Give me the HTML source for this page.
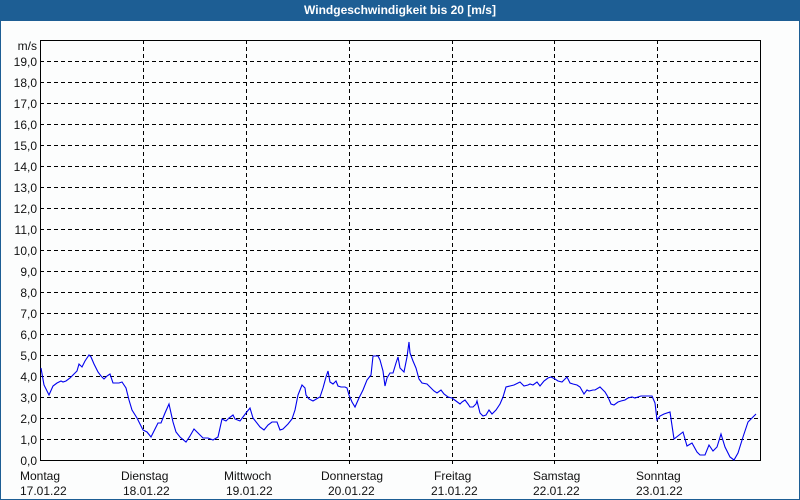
<!DOCTYPE html>
<html><head><meta charset="utf-8"><style>
html,body{margin:0;padding:0;width:800px;height:500px;overflow:hidden;background:#fcfdfd}
.wrap{position:absolute;left:0;top:0;width:798px;height:498px;border:1px solid #1d5e94;background:#fcfdfd}
.title{position:absolute;left:0;top:0;width:800px;height:21px;background:#1d5e94;color:#fff;font:bold 12px "Liberation Sans",sans-serif;text-align:center;line-height:21px}
svg{position:absolute;left:0;top:0}
text{font-family:"Liberation Sans",sans-serif;font-size:12px;fill:#111}
</style></head><body>
<div class="wrap"></div>
<div class="title">Windgeschwindigkeit bis 20 [m/s]</div>
<svg width="800" height="500">
<g stroke="#000" stroke-width="1" stroke-dasharray="4,3" fill="none" shape-rendering="crispEdges">
<path d="M40 61.5H760M40 82.5H760M40 103.5H760M40 124.5H760M40 145.5H760M40 166.5H760M40 187.5H760M40 208.5H760M40 229.5H760M40 250.5H760M40 271.5H760M40 292.5H760M40 313.5H760M40 334.5H760M40 355.5H760M40 376.5H760M40 397.5H760M40 418.5H760M40 439.5H760"/>
<path d="M143.5 40V466M246.5 40V466M349.5 40V466M452.5 40V466M554.5 40V466M657.5 40V466"/>
</g>
<rect x="40.5" y="40.5" width="720" height="420" fill="none" stroke="#000" stroke-width="1.2" shape-rendering="crispEdges"/>
<g text-anchor="end">
<text x="37" y="50">m/s</text>
<text x="37" y="66">19,0</text><text x="37" y="87">18,0</text><text x="37" y="108">17,0</text><text x="37" y="129">16,0</text><text x="37" y="150">15,0</text><text x="37" y="171">14,0</text><text x="37" y="192">13,0</text><text x="37" y="213">12,0</text><text x="37" y="234">11,0</text><text x="37" y="255">10,0</text><text x="37" y="276">9,0</text><text x="37" y="297">8,0</text><text x="37" y="318">7,0</text><text x="37" y="339">6,0</text><text x="37" y="360">5,0</text><text x="37" y="381">4,0</text><text x="37" y="402">3,0</text><text x="37" y="423">2,0</text><text x="37" y="444">1,0</text><text x="37" y="465">0,0</text>
</g>
<g>
<text x="20" y="480">Montag</text><text x="20" y="495">17.01.22</text>
<text x="121" y="480">Dienstag</text><text x="123" y="495">18.01.22</text>
<text x="224" y="480">Mittwoch</text><text x="226" y="495">19.01.22</text>
<text x="321" y="480">Donnerstag</text><text x="328" y="495">20.01.22</text>
<text x="434" y="480">Freitag</text><text x="431" y="495">21.01.22</text>
<text x="533" y="480">Samstag</text><text x="533" y="495">22.01.22</text>
<text x="636" y="480">Sonntag</text><text x="636" y="495">23.01.22</text>
</g>
<polyline fill="none" stroke="#0000ee" stroke-width="1.1" points="41,368 44,385 49,395 53,386 57,383 61,381 63,382 66,381 70,378 73,375 77,371 79,364 82,367 85,361 89,355 91,357 94,364 98,372 101,376 104,379 107,376 110,374 113,383 119,383 122,382 126,388 129,400 132,410 137,418 140,424 143,430 147,432 151,437 155,429 158,423 161,423 165,413 169,404 173,422 176,432 180,437 186,442 190,436 194,429 198,433 203,438 208,438 213,440 218,437 222,419 226,421 229,418 233,415 235,419 240,421 246,413 250,408 253,418 260,427 264,430 268,425 272,422 277,422 280,430 283,429 288,424 292,419 295,410 298,395 302,385 305,388 306,395 309,399 313,401 318,398 320,397 323,388 326,377 328,371 330,382 333,384 336,381 338,386 341,387 345,387 347,388 349,395 352,402 355,407 359,398 363,390 367,380 371,375 373,356 376,356 378,356 380,360 383,371 385,386 387,378 390,373 393,373 396,363 398,357 400,368 404,372 407,357 409,342 410,353 413,361 416,368 419,379 422,383 427,384 431,388 434,391 437,393 441,390 444,394 448,397 452,398 456,401 460,404 462,402 465,400 468,404 470,407 473,407 476,404 477,401 480,413 483,416 486,415 489,410 492,414 496,410 500,404 503,397 506,387 510,386 514,385 518,383 520,382 524,386 528,385 530,384 533,385 537,382 540,386 544,381 548,378 551,377 555,379 558,381 562,382 565,379 567,377 570,383 573,384 577,385 580,387 584,394 587,390 589,391 593,390 595,390 600,387 603,390 605,392 608,397 611,404 614,405 618,402 621,401 625,400 628,398 632,397 635,398 638,397 641,396 645,396 649,396 652,396 655,403 657,420 660,416 664,414 670,412 674,439 683,432 687,446 692,443 697,452 700,455 705,455 709,445 713,451 717,447 721,434 725,447 730,457 734,460 738,453 743,437 748,422 756,414"/>
</svg>
</body></html>
